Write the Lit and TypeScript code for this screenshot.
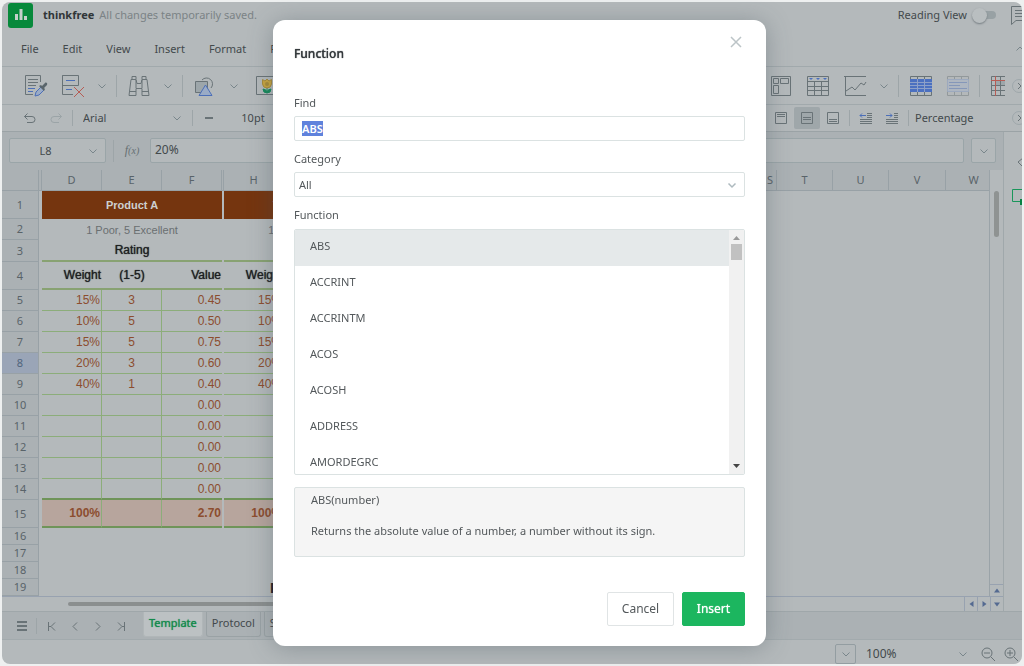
import { LitElement, html, svg, css } from "lit";
import { customElement, state, query } from "lit/decorators.js";
import { classMap } from "lit/directives/class-map.js";

const chevron = html`<svg class="chev" width="12" height="12" viewBox="0 0 12 12" aria-hidden="true"><path d="M2.5 4.5 6 8l3.5-3.5" /></svg>`;

const glyphs = {
  painter: svg`<path d="M16.500 8V1.500h-15v19H9M4 5.500h10M4 8.500h10M4 11.500h8"/><path class="blue" d="M4 14.500h7M4 17.500h5"/><path class="blue pale" d="m11 22 1-4 5-5 3 3-5 5z"/><path class="solid" d="m15 12 5 5 1-2-1-1 3-3c1-2-1-3-2-2l-3 3-1-1z"/>`,
  erase: svg`<path d="M12 20.500H1.500v-19h16v10h-16v-10"/><path class="blue" d="M5 6.500h9M5 15.500h6"/><path class="red" d="m13 13 10 10M23 13 13 23"/>`,
  find: svg`<path d="M5 5.500v-3h4v3M15 5.500v-3h4v3M4 5.500h5l1 4h4l1-4h5l2 16h-7v-7H9v7H2zM3 17.500h6M15 17.500h6M9 6v8M15 6v8"/>`,
  shapes: svg`<path d="M9 6a6 6 0 1 1 9 8"/><path class="fill" d="M2.500 7.500h12v11h-12z"/><path class="blue pale" d="m12.500 11 6.500 10.500H6z"/>`,
  picture: svg`<path d="M1.500 2.500h22v18h-22z"/><path class="leaf" d="M12 14v5M8 15q0 4 4 4t4-4q-3 0-4 3-1-3-4-3"/><path class="petal" d="M7.500 5.500 10 7l2-2 2 2 2.500-1.500V10q-.5 4-4.500 4t-4.500-4z"/><circle cx="12" cy="10" r="2" fill="#a98c3a" stroke="none"/>`,
  pivot: svg`<path d="M2.500 2.500h19v19h-19zM4.500 4.500h5v5h-5zM11.500 4.500h8v5h-8zM4.500 11.500h5v8h-5z"/>`,
  table: svg`<path d="M1.500 2.500h21v19h-21zM1.500 7.500h21M1.500 12.500h21M1.500 16.500h21M8.500 7v14M15.500 7v14"/><path class="bluefill" d="M3 4h4L5 6zM10 4h4l-2 2zM17 4h4l-2 2z"/>`,
  chart: svg`<path d="M1 2.500h22M2.500 2.500v19H23M3 17l6-4 3 3 6-7 3 2 2-3"/>`,
  bluetable: svg`<path d="M1.500 2.500h21v19h-21zM8.500 2v20M15.500 2v20"/><path class="bluefill" d="M1 5h22v13H1z"/><path class="gridline" d="M1 8.500h22M1 11.500h22M1 14.500h22M8.500 5v13M15.500 5v13"/>`,
  lighttable: svg`<g opacity=".45"><path d="M1.500 2.500h21v19h-21zM8.500 2v3M15.500 2v3M8.500 18v4M15.500 18v4"/><path fill="#a6b4cb" stroke="#7f97c4" d="M1.500 5.500h21v12h-21z"/><path class="blue" d="M3 8.500h18M3 11.500h11M3 14.500h18"/></g>`,
  freeze: svg`<path class="fill" stroke="none" d="M5 7h9v4H5z"/><path d="M14 2.500H.5v19H14M9.500 3v18M0 11.500h14M0 16.500h14"/><path class="red" d="M4.500 2v20M0 6.500h14"/>`,
};
const icon = (name: keyof typeof glyphs, label: string, cls = "") => html`<button class="slot ${cls}" aria-label=${label}>
  <svg width="24" height="24" viewBox="0 0 24 24">${glyphs[name]}</svg></button>`;

const small = {
  undo: svg`<path d="M5.500 3.500 2.500 6.500l3 3M2.500 6.500H10q3 0 3 3t-3 3H5"/>`,
  redo: svg`<path class="faint" d="m10.500 3.500 3 3-3 3M13.500 6.500H6q-3 0-3 3t3 3h5"/>`,
  minus: svg`<path class="thick" d="M4 8h8"/>`,
  top: svg`<path d="M2.500 2.500h11v11h-11zM4 4.500h8M4 6.500h8"/>`,
  middle: svg`<path d="M2.500 2.500h11v11h-11zM4 7.500h8M4 9.500h8"/>`,
  bottom: svg`<path d="M2.500 2.500h11v11h-11zM4 9.500h8M4 11.500h8"/>`,
  outdent: svg`<path d="M9 3.500h5M9 5.500h5M9 7.500h5M2 9.500h12M2 11.500h12M2 13.500h12"/><path class="blue" d="M8 5.500H2m2-2-2 2 2 2"/>`,
  indent: svg`<path d="M10 3.500h4M10 5.500h4M10 7.500h4M2 9.500h12M2 11.500h12M2 13.500h12"/><path class="blue" d="M2 5.500h6m-2-2 2 2-2 2"/>`,
  menu: svg`<path class="thick" d="M3 4h10M3 8h10M3 12h10"/>`,
  first: svg`<path d="M4.500 4v9M11 4.500l-4 4 4 4M5 8.500h2"/>`,
  prev: svg`<path d="m10 4.500-4 4 4 4"/>`,
  next: svg`<path d="m6 4.500 4 4-4 4"/>`,
  last: svg`<path d="M11.500 4v9M5 4.500l4 4-4 4M9 8.500h2"/>`,
  zoomout: svg`<circle cx="7" cy="7" r="5"/><path d="m11 11 4 4M4 7h6"/>`,
  zoomin: svg`<circle cx="7" cy="7" r="5"/><path d="m11 11 4 4M4 7h6M7 4v6"/>`,
  close: svg`<path d="m3 3 10 10M13 3 3 13"/>`,
};
const tool = (name: keyof typeof small, label: string, cls = "") => html`<button class="tool ${cls}" aria-label=${label}>
  <svg width="16" height="16" viewBox="0 0 16 16">${small[name]}</svg></button>`;

const baseStyles = css`
  * { box-sizing: border-box; }
  button, input, select { font: inherit; color: inherit; background: none; border: 0; padding: 0; margin: 0; border-radius: 0; outline: none; min-width: 0; }
  select { appearance: none; }
  svg { display: block; flex: none; fill: none; stroke: #697377; stroke-width: 1; }
  .chev { stroke: #79868b; pointer-events: none; }
  .blue { stroke: #4c6fb8; }
  .pale { fill: #9aabc6; }
  .red { stroke: #b65c54; }
  .solid { fill: #59656b; stroke: none; }
  .fill { fill: #9da6aa; }
  .bluefill { fill: #4b70c0; stroke: none; }
  .gridline { stroke: #8da0c8; }
  .leaf { stroke: #168a5c; fill: #168a5c; }
  .petal { fill: #c9a53f; stroke: #a98c3a; }
  .faint { stroke: #9ba4a7; }
  .thick { stroke-width: 2; }
  .pick { display: grid; align-items: center; }
  .pick > * { grid-area: 1 / 1; }
  .pick > svg { justify-self: end; }
`;

interface Row { h: number; kind: string; d?: string; e?: string; f?: string }
const ROWS: Row[] = [
  { h: 28, kind: "banner" },
  { h: 21, kind: "note" },
  { h: 22, kind: "rating" },
  { h: 28, kind: "head", d: "Weight", e: "(1-5)", f: "Value" },
  { h: 21, kind: "data", d: "15%", e: "3", f: "0.45" },
  { h: 21, kind: "data", d: "10%", e: "5", f: "0.50" },
  { h: 21, kind: "data", d: "15%", e: "5", f: "0.75" },
  { h: 21, kind: "data", d: "20%", e: "3", f: "0.60" },
  { h: 21, kind: "data", d: "40%", e: "1", f: "0.40" },
  ...[10, 11, 12, 13].map(() => ({ h: 21, kind: "data", d: "", e: "", f: "0.00" })),
  { h: 21, kind: "data last", d: "", e: "", f: "0.00" },
  { h: 28, kind: "total", d: "100%", e: "", f: "2.70" },
  { h: 17, kind: "" }, { h: 17, kind: "" }, { h: 17, kind: "" }, { h: 17, kind: "caption" },
];
const COLS: [string, number][] = [
  ["", 37], ["", 3], ["D", 60], ["E", 60], ["F", 60], ["", 2], ["H", 60], ["I", 60], ["J", 60],
  ["K", 45], ["L", 45], ["M", 45], ["N", 45], ["O", 45], ["P", 45], ["Q", 45], ["R", 45], ["S", 13],
  ["T", 56], ["U", 56], ["V", 57], ["W", 56],
];
const SHEET_WIDTH = COLS.reduce((sum, [, w]) => sum + w, 0);

@customElement("sheet-grid")
class SheetGrid extends LitElement {
  static styles = css`
    :host { display: block; overflow: hidden; min-width: 0; font: 12px "Liberation Sans", Arial, sans-serif; color: #8c4d2f; }
    table { table-layout: fixed; border-collapse: separate; border-spacing: 0; }
    th, td { box-sizing: border-box; padding: 0; font-weight: 400; line-height: 14px; white-space: nowrap; text-align: center; overflow: hidden; }
    th { background: #abb1b4; border-right: 1px solid #98a1a6; border-bottom: 1px solid #98a1a6; color: #596369; font: 11px/14px "Noto Sans", sans-serif; }
    thead th { height: 21px; }
    tbody th.active { background: #9aa5b7; color: #50647c; }
    .banner td.block { background: #75350f; color: #cdd0d1; font-weight: 700; font-size: 11px; }
    .note td { color: #6a6f71; font-size: 11px; }
    .data td.block { border-bottom: 1px solid #8cad7a; }
    .rating td.block, .head td.block { border-bottom: 2px solid #88a272; }
    .rating td, .head td { color: #1d2022; text-shadow: 0 0 1px currentColor; }
    .data td.inner, .total td.inner { border-right: 1px solid #8cad7a; }
    .last td.block { border-bottom: 2px solid #6f9459; }
    .total td.block { background: #b7a59d; font-weight: 700; border-bottom: 2px solid #6f9459; }
    td.right { text-align: right; padding-right: 1px; }
    .caption td.title { color: #1d2022; font-size: 15px; font-weight: 700; text-align: left; overflow: visible; padding-left: 46px; }
  `;

  private block(r: Row, second: boolean) {
    if (r.kind === "banner") return html`<td class="block" colspan="3">${second ? "Their Product A" : "Product A"}</td>`;
    if (r.kind === "note") return html`<td colspan="3">1 Poor, 5 Excellent</td>`;
    if (r.kind === "rating") return html`<td class="block"></td><td class="block">${second ? "" : "Rating"}</td><td class="block"></td>`;
    if (r.kind === "caption" && second) return html`<td class="title" colspan="3">Product</td>`;
    if (r.d === undefined) return html`<td colspan="3"></td>`;
    return html`<td class="block inner right">${r.d}</td><td class="block inner">${second ? "" : r.e}</td><td class="block right">${second ? "" : r.f}</td>`;
  }

  render() {
    return html`<table style="width:${SHEET_WIDTH}px">
      <colgroup>${COLS.map(([, w]) => html`<col style="width:${w}px" />`)}</colgroup>
      <thead><tr>${COLS.map(([n]) => html`<th scope="col">${n}</th>`)}</tr></thead>
      <tbody>${ROWS.map((r, i) => html`<tr class=${r.kind} style="height:${r.h}px">
        <th scope="row" class=${classMap({ active: i === 7 })}>${i + 1}</th>
        <td></td>${this.block(r, false)}<td></td>${this.block(r, true)}<td colspan="13"></td>
      </tr>`)}</tbody>
    </table>`;
  }
}

@customElement("function-dialog")
class FunctionDialog extends LitElement {
  static styles = [baseStyles, css`
    :host { display: block; width: 493px; background: #fff; border-radius: 12px; box-shadow: 0 2px 24px rgba(60, 75, 82, 0.35); color: #53585b; font: 11px/16px "Noto Sans", sans-serif; padding: 14px 21px 20px; }
    header { display: flex; justify-content: space-between; align-items: flex-start; height: 58px; }
    h2 { margin: 12px 0 0; font-size: 12px; font-weight: 500; line-height: 16px; color: #34393c; text-shadow: 0 0 1px currentColor; }
    .tool { width: 24px; height: 16px; display: grid; place-items: center; margin-right: -3px; }
    .close svg { stroke: #bcc4c7; stroke-width: 1.5; }
    .field { display: flex; flex-direction: column; gap: 5px; margin-bottom: 10px; }
    .field:first-of-type { margin-top: 3px; }
    .field.tall { gap: 6px; margin-bottom: 12px; }
    .box { height: 25px; border: 1px solid #dbe2e2; border-radius: 2px; width: 100%; }
    input.box { padding: 0 7px; font-weight: 600; }
    input::selection { background: #5f82dc; color: #fff; }
    select.box { padding: 0 4px; }
    .pick .chev { margin-right: 7px; stroke: #aebabf; stroke-width: 1.5; }
    .list { display: grid; grid-template-columns: 1fr 15px; height: 246px; border: 1px solid #dbe2e2; border-radius: 2px; overflow: hidden; }
    ul { margin: 0; padding: 0; list-style: none; overflow: hidden; }
    li { height: 36px; padding: 0 15px; line-height: 32px; }
    li.on { background: #e5e9ea; }
    .bar { background: #f1f1f1; display: flex; flex-direction: column; align-items: center; }
    .bar svg { stroke: none; fill: #9a9a9a; }
    .bar .down { fill: #444; margin-top: auto; }
    .thumb { width: 11px; height: 16px; background: #c1c1c1; }
    .about { height: 70px; border: 1px solid #dbe2e2; border-radius: 2px; background: #f5f5f5; padding: 4px 16px; }
    .about p { margin: 0 0 15px; }
    footer { display: flex; justify-content: flex-end; gap: 8px; margin-top: 35px; font-size: 12px; }
    footer button { height: 34px; width: 67px; border: 1px solid #e0e4e5; border-radius: 2px; }
    footer .go { width: 63px; background: #1cb65f; border-color: #1cb65f; color: #fff; text-shadow: 0 0 1px currentColor; }
  `];

  @state() private picked = "ABS";
  @query("#find") private find!: HTMLInputElement;
  private names = ["ABS", "ACCRINT", "ACCRINTM", "ACOS", "ACOSH", "ADDRESS", "AMORDEGRC"];

  firstUpdated() {
    this.find.focus();
    this.find.select();
  }

  render() {
    return html`
      <header><h2 id="t">Function</h2>${tool("close", "Close", "close")}</header>
      <div class="field"><label for="find">Find</label><input id="find" class="box" .value=${"ABS"} /></div>
      <div class="field"><label for="cat">Category</label>
        <div class="pick"><select id="cat" class="box"><option>All</option></select>${chevron}</div></div>
      <div class="field tall"><span id="fn">Function</span>
        <div class="list">
          <ul role="listbox" aria-labelledby="fn">${this.names.map((n) => html`<li role="option"
            aria-selected=${n === this.picked} class=${classMap({ on: n === this.picked })}
            @click=${() => (this.picked = n)}>${n}</li>`)}</ul>
          <div class="bar">
            <svg width="15" height="14" viewBox="0 0 15 14"><path d="M4 10 7.500 6 11 10z" /></svg>
            <div class="thumb"></div>
            <svg class="down" width="15" height="14" viewBox="0 0 15 14"><path d="M4 4 7.500 8 11 4z" /></svg>
          </div>
        </div></div>
      <div class="about"><p>ABS(number)</p><p>Returns the absolute value of a number, a number without its sign.</p></div>
      <footer><button>Cancel</button><button class="go">Insert</button></footer>`;
  }
}

@customElement("app-root")
class AppRoot extends LitElement {
  static styles = [baseStyles, css`
    :host { display: block; box-sizing: border-box; height: 100vh; padding: 2px; background: #eef0f0; font: 11px/16px "Noto Sans", sans-serif; color: #43494c; overflow: hidden; }
    .window { height: 100%; display: flex; flex-direction: column; background: #b4b9bb; border-radius: 8px; overflow: hidden; }
    .title { display: flex; align-items: center; height: 28px; padding: 0 0 2px 6px; flex: none; }
    .logo { width: 25px; height: 25px; background: #07893b; border-radius: 3px; display: grid; place-items: center; }
    .logo svg { stroke: #c5cfca; stroke-width: 3; }
    .brand { margin: 0 5px 0 10px; color: #303638; font-weight: 700; }
    .saved { color: #7b8386; flex: 1; }
    .switch { display: flex; align-items: center; gap: 5px; }
    .switch input { appearance: none; width: 24px; height: 8px; border-radius: 4px; background: linear-gradient(90deg, transparent 8px, #98a1a4 8px); display: flex; align-items: center; }
    .switch input::before { content: ""; width: 15px; height: 15px; border-radius: 8px; background: #b9bec0; box-shadow: 0 1px 2px #747c80; flex: none; }
    .comment { margin: 0 -12px 0 14px; }
    .menus { display: flex; height: 36px; padding: 2px 0 0 19px; gap: 24px; align-items: center; flex: none; }
    .menus .up { margin: 0 -4px 0 auto; transform: rotate(180deg); }
    .bar { display: flex; align-items: center; border-top: 1px solid #a1a9ac; padding-left: 15px; flex: none; }
    .one { height: 38px; }
    .two { height: 27px; }
    .slot { width: 37px; display: grid; place-items: center; }
    .slot.pic { margin-left: 3px; }
    .drop { width: 22px; display: grid; place-items: center; }
    .tool { width: 26px; height: 22px; display: grid; place-items: center; }
    .tool.on { background: #9fa7aa; border-radius: 2px; }
    .sep { width: 1px; height: 22px; background: #9da5a8; margin: 0 3px; flex: none; }
    .two .sep, .tabs .sep { height: 16px; }
    .spring { flex: 1; }
    .edge { width: 29px; display: grid; place-items: center; }
    .more { width: 14px; height: 14px; border: 1px solid #9ea7aa; border-radius: 7px; margin-right: -4px; display: grid; place-items: center; flex: none; }
    .font { width: 113px; padding-right: 6px; }
    .font select { padding-left: 7px; height: 22px; }
    .size { width: 62px; text-align: center; }
    .format { width: 100px; height: 22px; padding-left: 3px; }
    .work { flex: 1; min-height: 0; display: grid; grid-template-columns: minmax(0, 1fr) 19px; border-top: 1px solid #9ba3a6; }
    .main { display: flex; flex-direction: column; min-height: 0; }
    .formula { display: grid; grid-template-columns: 97px 1px 22px minmax(0, 1fr) 25px; gap: 7px; padding: 6px 7px 7px; background: #abb1b4; align-items: center; flex: none; }
    .cell { height: 25px; border: 1px solid #9aa5a8; border-radius: 2px; background: #b4b9bb; width: 100%; }
    .name { text-align: center; padding-right: 24px; }
    .formula .pick .chev { margin-right: 7px; }
    .formula .sep { margin: 0; }
    .fx { font: italic 12px "Liberation Serif", serif; color: #656e72; text-align: center; }
    .fx small { font-size: 10px; }
    .text { padding: 0 4px 3px; font-size: 12px; }
    .expand { display: grid; place-items: center; }
    .sheet { flex: 1; min-height: 0; display: grid; grid-template-columns: minmax(0, 1fr) 14px; grid-template-rows: minmax(0, 1fr); }
    .vscroll { border-left: 1px solid #9aa3a8; display: flex; flex-direction: column; align-items: center; padding-top: 21px; }
    .vthumb { width: 5px; height: 46px; border-radius: 3px; background: #8f9392; }
    .arrow { width: 13px; height: 12px; border-top: 1px solid #98a2b0; display: grid; place-items: center; }
    .arrow svg { stroke: none; fill: #546a91; }
    .vscroll .arrow { margin-top: auto; }
    .hscroll { display: flex; align-items: center; height: 15px; border-top: 1px solid #98a2b0; padding-left: 66px; flex: none; }
    .hthumb { width: 50%; height: 4px; border-radius: 2px; background: #8b8f8f; margin-right: auto; }
    .hscroll .arrow { border-top: 0; border-left: 1px solid #98a2b0; height: 14px; }
    .side { border-left: 1px solid #a0a8ab; background: #b4b9bb; overflow: hidden; padding: 22px 0 0 7px; display: flex; flex-direction: column; gap: 18px; }
    .tabs { display: flex; align-items: center; height: 29px; background: #abb1b4; border-top: 1px solid #9fa7aa; border-bottom: 1px solid #a2aaad; padding-left: 8px; flex: none; }
    .tabs .tool { width: 23px; }
    .tablist { display: flex; gap: 3px; margin-left: 11px; align-self: flex-start; }
    .tab { height: 25px; padding: 0 5px 2px; border: 1px solid #9aa2a5; border-top: 0; border-radius: 0 0 3px 3px; }
    .tab.on { background: #bcc1c3; border-color: #b0b6b8; color: #138a4c; text-shadow: 0 0 1px currentColor; }
    .status { height: 24px; display: flex; align-items: center; justify-content: flex-end; flex: none; padding-top: 4px; }
    .mini { width: 21px; height: 20px; border: 1px solid #939da1; border-radius: 2px; display: grid; place-items: center; margin-right: 8px; }
    .zoom { width: 105px; margin-right: 7px; }
    .zoom select { padding-left: 2px; font-size: 12px; }
    .status .tool { width: 23px; }
    .overlay { position: fixed; inset: 0; display: grid; place-items: center; padding-left: 15px; }
  `];

  render() {
    const drop = html`<button class="drop" aria-label="More options">${chevron}</button>`;
    const sep = html`<span class="sep"></span>`;
    const more = html`<button class="more" aria-label="More tools"><svg width="8" height="8" viewBox="0 0 8 8"><path d="m3 1 3 3-3 3" /></svg></button>`;
    return html`
      <div class="window">
        <div class="title">
          <span class="logo"><svg width="16" height="16" viewBox="0 0 16 16"><path d="M3.500 7v6M8 2v11M12.500 9v4" /></svg></span>
          <span class="brand">thinkfree</span><span class="saved">All changes temporarily saved.</span>
          <label class="switch">Reading View <input type="checkbox" role="switch" /></label>
          <svg class="comment" width="24" height="20" viewBox="0 0 24 20"><path d="M1.500 1.500h20v14H6l-4.500 4zM5 5.500h12M5 8.500h12M5 11.500h12" /></svg>
        </div>
        <nav class="menus">
          ${["File", "Edit", "View", "Insert", "Format", "Formula"].map((m) => html`<button>${m}</button>`)}
          <button class="up" aria-label="Collapse">${chevron}</button>
        </nav>
        <div class="bar one">
          ${icon("painter", "Format painter")}${icon("erase", "Clear")}${drop}${sep}${icon("find", "Find")}${drop}${sep}
          ${icon("shapes", "Shapes")}${drop}${icon("picture", "Picture", "pic")}
          <span class="spring"></span>
          ${icon("pivot", "Pivot table")}${icon("table", "Filter")}${icon("chart", "Chart")}${drop}${sep}
          ${icon("bluetable", "Table")}${icon("lighttable", "Table style")}${sep}
          <button class="edge" aria-label="Freeze panes"><svg width="14" height="24" viewBox="0 0 14 24">${glyphs.freeze}</svg></button>${more}
        </div>
        <div class="bar two">
          ${tool("undo", "Undo")}${tool("redo", "Redo")}${sep}
          <div class="pick font"><select aria-label="Font"><option>Arial</option></select>${chevron}</div>${sep}
          ${tool("minus", "Smaller")}<input class="size" aria-label="Font size" value="10pt" />
          <span class="spring"></span>
          ${tool("top", "Align top")}${tool("middle", "Align middle", "on")}${tool("bottom", "Align bottom")}${sep}
          ${tool("outdent", "Decrease indent")}${tool("indent", "Increase indent")}${sep}
          <select class="format" aria-label="Number format"><option>Percentage</option></select>${more}
        </div>
        <div class="work">
          <div class="main">
            <div class="formula">
              <div class="pick"><input class="cell name" aria-label="Cell" value="L8" />${chevron}</div>
              ${sep}<span class="fx">f<small>(x)</small></span>
              <input class="cell text" aria-label="Formula" value="20%" />
              <button class="cell expand" aria-label="Expand">${chevron}</button>
            </div>
            <div class="sheet">
              <sheet-grid></sheet-grid>
              <div class="vscroll"><div class="vthumb"></div>
                <button class="arrow" aria-label="Scroll up"><svg width="8" height="5" viewBox="0 0 8 5"><path d="M1 4.500 4 .5l3 4z" /></svg></button>
              </div>
            </div>
            <div class="hscroll"><div class="hthumb"></div>
              <button class="arrow" aria-label="Scroll left"><svg width="5" height="8" viewBox="0 0 5 8"><path d="M4.500 1v6L.5 4z" /></svg></button>
              <button class="arrow" aria-label="Scroll right"><svg width="5" height="8" viewBox="0 0 5 8"><path d="M.5 1v6l4-3z" /></svg></button>
              <button class="arrow" aria-label="Scroll down"><svg width="8" height="5" viewBox="0 0 8 5"><path d="M1 .5 4 4.500l3-4z" /></svg></button>
            </div>
          </div>
          <aside class="side">
            <svg width="16" height="16" viewBox="0 0 16 16"><path d="m12 4-5 4 5 5" /></svg>
            <svg width="20" height="18" viewBox="0 0 20 18"><path stroke="#19965a" d="M1.500 1.500h16v12h-16z" /><path stroke="none" fill="#078243" d="M9 11h8v6H9z" /></svg>
          </aside>
        </div>
        <div class="tabs">
          ${tool("menu", "Sheets")}${sep}${tool("first", "First")}${tool("prev", "Previous")}${tool("next", "Next")}${tool("last", "Last")}
          <div class="tablist"><button class="tab on">Template</button><button class="tab">Protocol</button><button class="tab">Sheet</button></div>
        </div>
        <div class="status">
          <button class="mini" aria-label="Options">${chevron}</button>
          <div class="pick zoom"><select aria-label="Zoom"><option>100%</option></select>${chevron}</div>
          ${tool("zoomout", "Zoom out")}${tool("zoomin", "Zoom in")}
        </div>
      </div>
      <div class="overlay"><function-dialog role="dialog" aria-label="Function"></function-dialog></div>`;
  }
}
